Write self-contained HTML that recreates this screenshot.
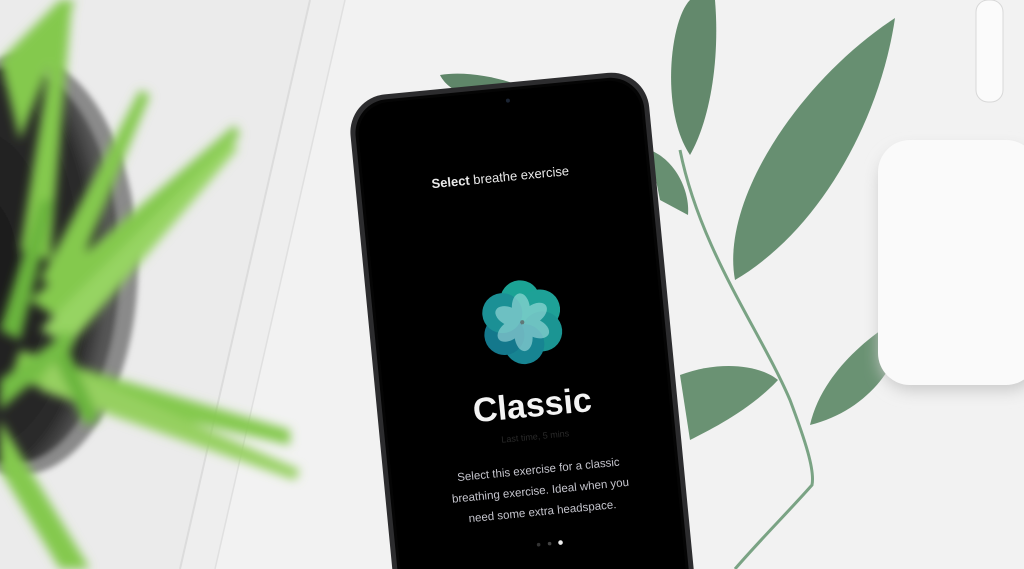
<!DOCTYPE html>
<html><head><meta charset="utf-8"><style>
html,body{margin:0;padding:0;width:1024px;height:569px;overflow:hidden;background:#e8e8e8}
svg{display:block}
</style></head><body>
<svg width="1024" height="569" viewBox="0 0 1024 569" xmlns="http://www.w3.org/2000/svg">
<defs>
<filter id="b3"><feGaussianBlur stdDeviation="3"/></filter>
<filter id="b6"><feGaussianBlur stdDeviation="5"/></filter>
<filter id="sh"><feGaussianBlur stdDeviation="8"/></filter>
<radialGradient id="pot" cx="0.35" cy="0.5" r="0.6"><stop offset="0" stop-color="#1a1a1a"/><stop offset="0.85" stop-color="#2a2a2a"/><stop offset="1" stop-color="#555"/></radialGradient>
</defs>
<rect width="1024" height="569" fill="#ebebeb"/>
<polygon points="310,0 1024,0 1024,569 180,569" fill="#eeeeee"/>
<polygon points="345,0 1024,0 1024,569 215,569" fill="#f2f2f2"/>
<line x1="310" y1="0" x2="180" y2="569" stroke="#dcdcdc" stroke-width="2"/>
<line x1="345" y1="0" x2="215" y2="569" stroke="#e0e0e0" stroke-width="1.5"/>
<g filter="url(#b3)">
<ellipse cx="20" cy="265" rx="118" ry="210" fill="#8a8a8a"/>
<ellipse cx="12" cy="265" rx="108" ry="200" fill="url(#pot)"/>
</g>
<g filter="url(#b6)" fill="#84c94e">
<polygon points="0,60 60,0 75,0 20,140"/>
<polygon points="20,250 60,0 72,0 50,260"/>
<polygon points="40,280 140,90 150,95 70,290"/>
<polygon points="30,300 235,125 240,135 60,320"/>
<polygon points="40,330 230,140 238,148 70,345" fill="#96d462"/>
<polygon points="20,350 290,430 290,445 10,380"/>
<polygon points="50,360 300,470 295,480 40,390" fill="#96d060"/>
<polygon points="0,420 90,569 60,569 0,470"/>
<polygon points="60,330 100,420 85,425 50,350" fill="#6bb53c"/>
<polygon points="0,330 40,200 55,200 20,340" fill="#6ab53c"/>
<polygon points="0,380 70,330 75,345 0,410" fill="#74be44"/>
</g>
<g fill="#668f70">
<path d="M680,150 C700,250 760,330 790,400 C805,440 815,470 812,485 C790,510 760,540 735,569" fill="none" stroke="#7aa384" stroke-width="3"/>
<path d="M690,155 C660,110 670,20 690,0 L715,0 C720,60 710,120 690,155Z" fill="#63896c"/>
<path d="M735,280 C720,200 800,80 895,18 C880,120 820,230 735,280Z" fill="#678f71"/>
<path d="M440,75 C470,70 510,80 530,90 L470,96 C455,92 445,85 440,75Z" fill="#5f8669"/>
<path d="M650,150 C675,160 690,190 688,215 L660,200Z" fill="#678f71"/>
<path d="M810,425 C820,380 860,340 905,315 C905,360 870,410 810,425Z" fill="#6a9273"/>
<path d="M680,375 C720,360 760,365 778,380 C750,410 710,430 690,440Z" fill="#6a9273"/>
</g>
<rect x="880" y="150" width="160" height="240" rx="32" fill="#c8c8c8" filter="url(#sh)"/>
<rect x="878" y="140" width="160" height="245" rx="32" fill="#fafafa"/>
<rect x="976" y="0" width="27" height="102" rx="12" fill="#fbfbfb" stroke="#d8d8d8"/>
<g transform="rotate(-5.5 525 330)">
<rect x="370" y="82" width="300" height="620" rx="38" fill="#2c2c2e"/>
<rect x="375" y="87" width="290" height="610" rx="34" fill="#050505"/>
<rect x="378" y="90" width="284" height="604" rx="32" fill="#000"/>
<circle cx="530" cy="100" r="2" fill="#1b2433"/>
<text x="515" y="180" text-anchor="middle" font-family="Liberation Sans, sans-serif" font-size="13" fill="#e8e8e8"><tspan font-weight="bold">Select</tspan> breathe exercise</text>
<g transform="translate(523 322)">
<g opacity="0.9">
<circle cx="0" cy="-22" r="20" fill="#1fb5a6"/>
<circle cx="19" cy="-11" r="20" fill="#22b3a8"/>
<circle cx="19" cy="11" r="20" fill="#1ea6a3"/>
<circle cx="0" cy="22" r="20" fill="#1a93a2"/>
<circle cx="-19" cy="11" r="20" fill="#17859c"/>
<circle cx="-19" cy="-11" r="20" fill="#1ea0a6"/>
</g>
<g fill="#bff0f0" opacity="0.5">
<ellipse cx="0" cy="-14" rx="9" ry="15"/>
<ellipse cx="0" cy="14" rx="9" ry="15"/>
<ellipse cx="0" cy="-14" rx="9" ry="15" transform="rotate(60)"/>
<ellipse cx="0" cy="14" rx="9" ry="15" transform="rotate(60)"/>
<ellipse cx="0" cy="-14" rx="9" ry="15" transform="rotate(-60)"/>
<ellipse cx="0" cy="14" rx="9" ry="15" transform="rotate(-60)"/>
</g>
</g>
<text x="525" y="417" text-anchor="middle" font-family="Liberation Sans, sans-serif" font-size="34" font-weight="bold" fill="#f4f4f4">Classic</text>
<text x="525" y="440" text-anchor="middle" font-family="Liberation Sans, sans-serif" font-size="9" fill="#2a2a2a">Last time, 5 mins</text>
<g font-family="Liberation Sans, sans-serif" font-size="11.5" fill="#c4c4cc" text-anchor="middle">
<text x="525" y="474">Select this exercise for a classic</text>
<text x="525" y="495">breathing exercise. Ideal when you</text>
<text x="525" y="516">need some extra headspace.</text>
</g>
<circle cx="518" cy="545" r="1.8" fill="#333"/>
<circle cx="529" cy="545" r="1.8" fill="#444"/>
<circle cx="540" cy="545" r="2.3" fill="#eee"/>
</g>
</svg>
</body></html>
